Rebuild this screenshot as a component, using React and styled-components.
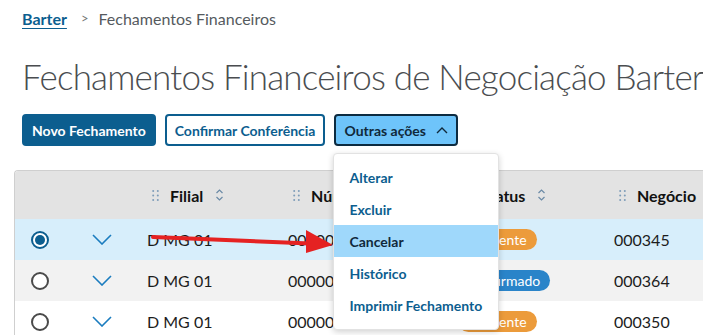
import styled, { createGlobalStyle } from 'styled-components';

const GlobalStyle = createGlobalStyle`
  body {
    margin: 0;
    background: #ffffff;
    font-family: Lato, "Noto Sans", sans-serif;
    overflow: hidden;
  }
`;

const Page = styled.div`
  position: relative;
  width: 703px;
  height: 335px;
  overflow: hidden;
`;

const Breadcrumb = styled.nav`
  display: flex;
  align-items: center;
  height: 36px;
  padding-left: 22px;
  font-size: 16px;
  color: #555a5e;
`;

const CrumbLink = styled.a`
  color: #0c5e8f;
  font-weight: 700;
  text-decoration: underline;
  text-underline-offset: 3px;
`;

const CrumbSep = styled.span`
  margin: 0 10px 0 14px;
  color: #777;
  font-size: 13px;
`;

const Title = styled.h1`
  margin: 18px 0 0;
  padding-left: 22px;
  font-size: 35px;
  line-height: 44px;
  font-weight: 300;
  letter-spacing: -0.8px;
  color: #4a4d50;
  white-space: nowrap;
`;

const Actions = styled.div`
  display: flex;
  gap: 9px;
  margin-top: 16px;
  padding-left: 22px;
`;

const Button = styled.button`
  height: 32px;
  padding: 0 8px;
  border-radius: 4px;
  font-family: inherit;
  font-size: 14px;
  font-weight: 700;
  display: flex;
  align-items: center;
  gap: 10px;
  border: 2px solid ${p => (p.$variant === 'open' ? '#0d2b40' : '#0c5e8f')};
  background: ${p =>
    p.$variant === 'primary' ? '#0c5e8f' : p.$variant === 'open' ? '#6ec4fa' : '#ffffff'};
  color: ${p =>
    p.$variant === 'primary' ? '#ffffff' : p.$variant === 'open' ? '#10293b' : '#0c5e8f'};
`;

const MenuWrap = styled.div`
  position: relative;
`;

const Menu = styled.ul`
  position: absolute;
  top: calc(100% + 7px);
  left: -1px;
  z-index: 5;
  width: 164px;
  margin: 0;
  padding: 7px 0 8px;
  list-style: none;
  background: #ffffff;
  border: 1px solid #e2e2e2;
  border-radius: 4px;
  box-shadow: 0 2px 6px rgba(0, 0, 0, 0.18);
`;

const MenuItem = styled.li`
  height: 32px;
  display: flex;
  align-items: center;
  padding-left: 15px;
  font-size: 14px;
  font-weight: 700;
  color: ${p => (p.$active ? '#10293b' : '#0c5e8f')};
  background: ${p => (p.$active ? '#9fd8fb' : 'transparent')};
  white-space: nowrap;
`;

const Table = styled.div`
  margin: 24px 0 0 14px;
  width: 760px;
  border-top: 1px solid #cfcfcf;
  border-left: 1px solid #cfcfcf;
  border-top-left-radius: 4px;
  overflow: hidden;
`;

const Row = styled.div`
  display: grid;
  grid-template-columns: 49px 75px 141px 170px 156px 1fr;
  align-items: center;
  height: ${p => (p.$header ? '48px' : '41px')};
  background: ${p =>
    p.$header ? '#e3e3e3' : p.$selected ? '#d7eefb' : p.$striped ? '#f2f2f2' : '#ffffff'};
  color: #1c1c1c;
  font-size: 16px;
`;

const Cell = styled.div`
  display: flex;
  align-items: center;
  justify-content: ${p => (p.$center ? 'center' : 'flex-start')};
  padding-left: ${p => (p.$center ? '0' : '8px')};
  white-space: nowrap;
`;

const HeadCell = styled.div`
  display: flex;
  align-items: center;
  padding-left: 13px;
  font-size: 16px;
  font-weight: 700;
  color: #111;
  white-space: nowrap;
`;

const HeadLabel = styled.span`
  margin: 0 12px 0 11px;
`;

const Radio = styled.span`
  width: 18px;
  height: 18px;
  box-sizing: border-box;
  border-radius: 50%;
  border: 2px solid ${p => (p.$checked ? '#0c5e8f' : '#4a4a4a')};
  background: #fff;
  display: flex;
  align-items: center;
  justify-content: center;

  &::after {
    content: '';
    display: ${p => (p.$checked ? 'block' : 'none')};
    width: 10px;
    height: 10px;
    border-radius: 50%;
    background: #0c5e8f;
  }
`;

const Badge = styled.span`
  display: inline-flex;
  align-items: center;
  height: 21px;
  padding: 0 10px;
  border-radius: 11px;
  font-size: 14px;
  color: #ffffff;
  background: ${p => (p.$tone === 'ok' ? '#2a84c9' : '#ec9b3b')};
`;

const ArrowMark = styled.svg`
  position: absolute;
  left: 150px;
  top: 226px;
  z-index: 6;
  pointer-events: none;
`;

const DragDots = () => (
  <svg width="7" height="11" viewBox="0 0 7 11">
    {[1, 5.5, 10].map(y =>
      [1.2, 5.8].map(x => <circle key={`${x}-${y}`} cx={x} cy={y} r="1" fill="#7d9cb8" />)
    )}
  </svg>
);

const SortIcon = () => (
  <svg width="9" height="14" viewBox="0 0 9 14" fill="none" stroke="#6b8aa6" strokeWidth="1.2">
    <path d="M1.5 5 L4.5 2 L7.5 5" />
    <path d="M1.5 9 L4.5 12 L7.5 9" />
  </svg>
);

const ChevronDown = () => (
  <svg width="20" height="11" viewBox="0 0 20 11" fill="none" stroke="#1a7cbf" strokeWidth="1.6">
    <path d="M1 1 L10 10 L19 1" />
  </svg>
);

const ChevronUp = () => (
  <svg width="12" height="7" viewBox="0 0 12 7" fill="none" stroke="#10293b" strokeWidth="1.4">
    <path d="M1 6 L6 1 L11 6" />
  </svg>
);

const rows = [
  { filial: 'D MG 01', numero: '000001', status: 'Pendente', negocio: '000345', selected: true },
  { filial: 'D MG 01', numero: '000002', status: 'Confirmado', negocio: '000364' },
  { filial: 'D MG 01', numero: '000003', status: 'Pendente', negocio: '000350' },
];

const actions = ['Alterar', 'Excluir', 'Cancelar', 'Histórico', 'Imprimir Fechamento'];

export default function App() {
  return (
    <Page>
      <GlobalStyle />
      <Breadcrumb>
        <CrumbLink>Barter</CrumbLink>
        <CrumbSep>&gt;</CrumbSep>
        <span>Fechamentos Financeiros</span>
      </Breadcrumb>
      <Title>Fechamentos Financeiros de Negociação Barter</Title>
      <Actions>
        <Button $variant="primary">Novo Fechamento</Button>
        <Button>Confirmar Conferência</Button>
        <MenuWrap>
          <Button $variant="open">
            Outras ações <ChevronUp />
          </Button>
          <Menu>
            {actions.map(a => (
              <MenuItem key={a} $active={a === 'Cancelar'}>{a}</MenuItem>
            ))}
          </Menu>
        </MenuWrap>
      </Actions>
      <Table>
        <Row $header>
          <div />
          <div />
          <HeadCell><DragDots /><HeadLabel>Filial</HeadLabel><SortIcon /></HeadCell>
          <HeadCell><DragDots /><HeadLabel>Número</HeadLabel><SortIcon /></HeadCell>
          <HeadCell><DragDots /><HeadLabel>Status</HeadLabel><SortIcon /></HeadCell>
          <HeadCell><DragDots /><HeadLabel>Negócio</HeadLabel></HeadCell>
        </Row>
        {rows.map((r, i) => (
          <Row key={i} $selected={r.selected} $striped={i % 2 === 1}>
            <Cell $center><Radio $checked={r.selected} /></Cell>
            <Cell $center><ChevronDown /></Cell>
            <Cell>{r.filial}</Cell>
            <Cell>{r.numero}</Cell>
            <Cell><Badge $tone={r.status === 'Confirmado' ? 'ok' : 'wait'}>{r.status}</Badge></Cell>
            <Cell>{r.negocio}</Cell>
          </Row>
        ))}
      </Table>
      <ArrowMark width="186" height="30" viewBox="0 0 186 30">
        <path d="M3 11 L160 17.5" stroke="#e52222" strokeWidth="4" strokeLinecap="round" />
        <path d="M156 4 L183 19 L156 27 Z" fill="#e52222" />
      </ArrowMark>
    </Page>
  );
}
